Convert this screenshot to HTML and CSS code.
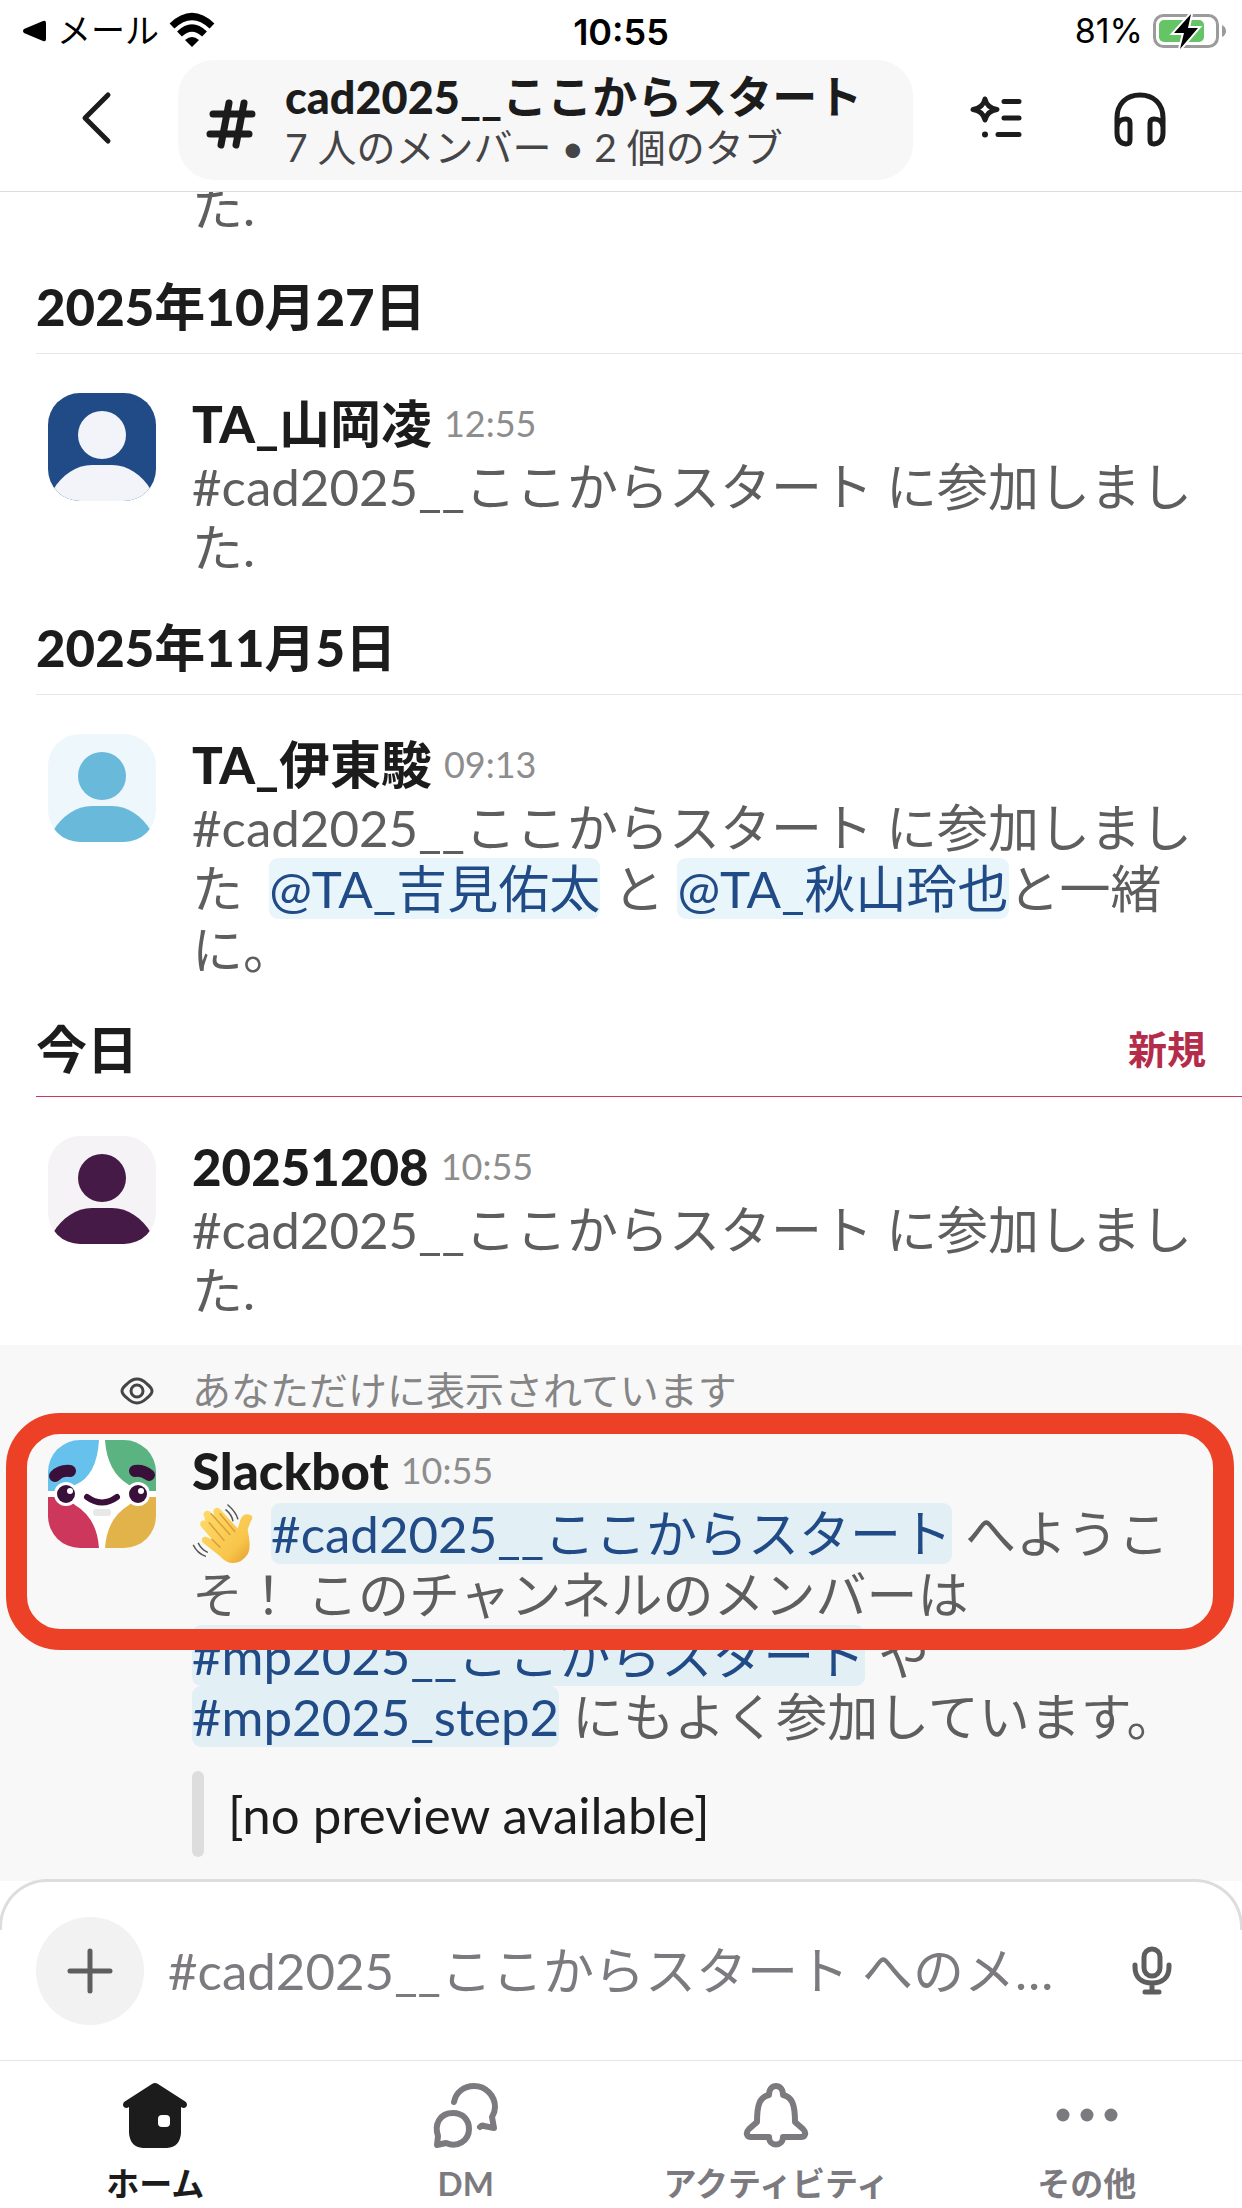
FILE: index.html
```html
<!DOCTYPE html>
<html lang="ja">
<head>
	<meta charset="UTF-8">
	<meta name="viewport" content="width=device-width">
	<title>cad2025__ここからスタート</title>
	<link rel="stylesheet" href="styles.css">
</head>
<body>
	<svg class="defs" width="0" height="0">
		<symbol id="person" viewBox="0 0 108 108">
			<ellipse cx="54" cy="42" rx="24" ry="24"/>
			<path d="M5 97C14 82 28 72 44 72H64C80 72 94 82 103 97V108H5z"/>
		</symbol>
	</svg>

	<div class="status">
		<div class="status-left">
			<svg width="24" height="22" viewBox="0 0 24 22"><path d="M1 9L20 1Q23 0 23 3V19Q23 22 20 21L1 13Q-1 11 1 9z"/></svg>
			<span>メール</span>
			<svg width="46" height="34" viewBox="0 0 46 34">
				<path d="M3 12Q23-7 43 12" fill="none" stroke="#000" stroke-width="7"/>
				<path d="M10.500 20Q23 8 35.500 20" fill="none" stroke="#000" stroke-width="7"/>
				<path d="M16 26Q23 20 30 26L23 33z"/>
			</svg>
		</div>
		<div class="status-time">10:55</div>
		<div class="status-right">
			<span>81%</span>
			<svg width="74" height="34" viewBox="0 0 74 34">
				<rect x="1.500" y="1.500" width="63" height="31" rx="9" fill="none" stroke="#9b9b9b" stroke-width="3"/>
				<rect x="6" y="6" width="45" height="22" rx="5" fill="#65c466"/>
				<path d="M69 11Q73 13 73 17T69 23z" fill="#9b9b9b"/>
				<path d="M38 0L21 19H31L27 35L45 14H35z" stroke="#fff" stroke-width="4" paint-order="stroke"/>
			</svg>
		</div>
	</div>

	<header class="header">
		<button class="icon-btn back" aria-label="戻る">
			<svg width="30" height="52" viewBox="0 2 30 52"><path d="M28 3L5 26L28 49"/></svg>
		</button>
		<button class="channel">
			<svg class="hash" width="48" height="50" viewBox="0 -3 48 50"><path d="M22 4L14 46M37 4L29 46M6 15H45M3 35H42"/></svg>
			<span class="channel-text">
				<span class="channel-name">cad2025__<span class="cjk">ここからスタート</span></span>
				<span class="channel-sub">7 人のメンバー • 2 個のタブ</span>
			</span>
		</button>
		<button class="icon-btn" aria-label="要約">
			<svg width="54" height="54" viewBox="0 3 54 54">
				<path d="M16 9Q18 18 28 19.500Q18 21 16 30Q14 21 4 19.500Q14 18 16 9zM35 11.500H50M35 28H50M29 44.500H50"/>
				<circle cx="16" cy="44.500" r="3" class="fill"/>
			</svg>
		</button>
		<button class="icon-btn" aria-label="ハドルミーティング">
			<svg width="54" height="56" viewBox="0 1 54 56">
				<path d="M4 42V27C4 13 13 4 27 4S50 13 50 27V42M4 36C5 29 9 28 13 28Q17 28 17 32V49Q17 53 13 53Q4 52 4 42M50 36C49 29 45 28 41 28Q37 28 37 32V49Q37 53 41 53Q50 52 50 42"/>
			</svg>
		</button>
	</header>

	<main class="messages">
		<article class="message cut">
			<div class="body"><p class="text">た.</p></div>
		</article>

		<h2 class="day"><span>2025<span class="cjk">年</span>10<span class="cjk">月</span>27<span class="cjk">日</span></span></h2>
		<article class="message">
			<svg class="avatar navy"><use href="#person"/></svg>
			<div class="body">
				<div class="meta"><b>TA_<span class="cjk">山岡凌</span></b><time>12:55</time></div>
				<p class="text">#cad2025__ここからスタート に参加しました.</p>
			</div>
		</article>

		<h2 class="day"><span>2025<span class="cjk">年</span>11<span class="cjk">月</span>5<span class="cjk">日</span></span></h2>
		<article class="message">
			<svg class="avatar sky"><use href="#person"/></svg>
			<div class="body">
				<div class="meta"><b>TA_<span class="cjk">伊東駿</span></b><time>09:13</time></div>
				<p class="text">#cad2025__ここからスタート に参加しました&nbsp; <a href="#">@TA_吉見佑太</a> と <a href="#">@TA_秋山玲也</a>と一緒に。</p>
			</div>
		</article>

		<h2 class="day new"><span class="cjk">今日</span><span class="new-label">新規</span></h2>
		<article class="message">
			<svg class="avatar plum"><use href="#person"/></svg>
			<div class="body">
				<div class="meta"><b>20251208</b><time>10:55</time></div>
				<p class="text">#cad2025__ここからスタート に参加しました.</p>
			</div>
		</article>

		<section class="only-you">
			<div class="notice">
				<svg width="34" height="28" viewBox="0 0 34 28">
					<path d="M2 14Q2 11 7 7Q12 2 17 2T27 7Q32 11 32 14T27 21Q22 26 17 26T7 21Q2 17 2 14z"/>
					<circle cx="17" cy="14" r="6"/>
				</svg>
				<span>あなただけに表示されています</span>
			</div>
			<article class="message">
				<svg class="avatar bot" viewBox="0 0 108 108">
					<path d="M0 0H51Q49 36 27 45L17 51H0z" fill="#66c1ec"/>
					<path d="M57 0H108V51H91L81 45Q59 32 57 0z" fill="#5bb381"/>
					<path d="M0 57H17L27 65Q49 78 51 108H0z" fill="#cc375b"/>
					<path d="M108 57H91L81 65Q59 78 57 108H108z" fill="#e3b34b"/>
					<circle cx="18" cy="54" r="12" fill="#fff"/>
					<circle cx="90" cy="54" r="12" fill="#fff"/>
					<circle cx="18" cy="54" r="9" fill="#38103a"/>
					<circle cx="90" cy="54" r="9" fill="#38103a"/>
					<circle cx="22" cy="51" r="3" fill="#fff"/>
					<circle cx="93" cy="51" r="3" fill="#fff"/>
					<path d="M7 36Q13 30 22 31M101 35Q95 30 87 31" fill="none" stroke="#38103a" stroke-width="12" stroke-linecap="round"/>
					<path d="M39 57Q54 68 69 57" fill="none" stroke="#38103a" stroke-width="6" stroke-linecap="round"/>
					<rect x="45" y="69" width="18" height="7" rx="3" fill="#e8e8e8"/>
				</svg>
				<div class="body">
					<div class="meta"><b>Slackbot</b><time>10:55</time></div>
					<p class="text"><svg class="wave" viewBox="0 0 62 62" role="img" aria-label="wave">
						<defs>
							<linearGradient id="skin" x1="0" y1="0" x2="1" y2="1">
								<stop offset="0" stop-color="#ffdc6b"/>
								<stop offset="0.700" stop-color="#f8c54a"/>
								<stop offset="1" stop-color="#e09a2c"/>
							</linearGradient>
						</defs>
						<path fill="url(#skin)" d="M41 61Q34 61 28 54L10 40Q8 35 13 34L20 37L8 23Q7 17 13 18L11 11Q13 6 18 9L22 14L21 8Q23 3 28 6L46 26L49 16Q53 9 60 13Q62 15 59 19L56 27Q60 46 56 52Q50 61 41 61z"/>
						<path d="M17 20L32 38M19 11L38 32M28 11L43 29M20 37L28 45" fill="none" stroke="#dc9d38" stroke-width="1.500" stroke-linecap="round"/>
						<path d="M36 2Q44 9 46 16M34 7Q40 12 41 18M1 43Q5 51 13 54M6 41Q9 47 15 50" fill="none" stroke="#555" stroke-width="1.500" stroke-linecap="round"/>
					</svg> <a href="#">#cad2025__ここからスタート</a> へようこそ！ このチャンネルのメンバーは <a href="#">#mp2025__ここからスタート</a> や <a href="#">#mp2025_step2</a> にもよく参加しています。</p>
					<div class="attachment">[no preview available]</div>
				</div>
			</article>
			<div class="marker"></div>
		</section>
	</main>

	<form class="composer">
		<button type="button" class="plus" aria-label="追加">
			<svg width="46" height="46" viewBox="0 0 46 46"><path d="M23 3V43M3 23H43"/></svg>
		</button>
		<input type="text" aria-label="メッセージ" placeholder="#cad2025__ここからスタート へのメッセージ">
		<button type="button" class="mic" aria-label="音声">
			<svg width="40" height="50" viewBox="0 0 40 50">
				<rect x="12" y="3" width="16" height="27" rx="8"/>
				<path d="M3 19V21C3 31 9 37 20 37S37 31 37 21V19M20 37V46M13 46H27"/>
			</svg>
		</button>
	</form>

	<nav class="tabs">
		<a href="#" class="active">
			<svg width="64" height="66" viewBox="0 0 64 66">
				<path class="fill" d="M29 1Q32-1 35 1L63 19Q65 22 63 24Q61 26 58 24V50Q57 64 44 65H20Q7 64 6 50V24Q3 26 1 24Q-1 22 1 19z"/>
				<rect class="window" x="35" y="32" width="12" height="12" rx="4"/>
			</svg>
			<span>ホーム</span>
		</a>
		<a href="#">
			<svg width="64" height="66" viewBox="0 0 64 66">
				<path d="M20 19C22 9 30 3 40 3C52 3 61 13 61 24Q61 29 58 34L60 45L50 43Q48 42 46 44"/>
				<path d="M4 53C0 41 6 30 19 30C29 30 35 37 35 46C35 58 23 65 12 60L3 62z"/>
			</svg>
			<span>DM</span>
		</a>
		<a href="#">
			<svg width="64" height="66" viewBox="0 0 64 66">
				<path d="M25 12C25 0 39 0 39 12C48 14 51 21 51 39L59 46C63 50 61 54 57 54H39C39 64 25 64 25 54H7C3 54 1 50 5 46L13 39C13 21 16 14 25 12z"/>
			</svg>
			<span>アクティビティ</span>
		</a>
		<a href="#">
			<svg width="64" height="66" viewBox="0 0 64 66">
				<circle class="fill" cx="8" cy="32" r="6.500"/><circle class="fill" cx="32" cy="32" r="6.500"/><circle class="fill" cx="56" cy="32" r="6.500"/>
			</svg>
			<span>その他</span>
		</a>
	</nav>
</body>
</html>
```
FILE: styles.css
```css
*{box-sizing: border-box;}
body{margin: 0;height: 100vh;display: flex;flex-direction: column;background: #fff;color: #1c1c1c;font-family: Lato,"Noto Sans CJK JP",sans-serif;font-size: 51px;line-height: 61px;}
button{border: 0;padding: 0;background: none;color: inherit;font: inherit;text-align: left;}
a{text-decoration: none;}
h2,p{margin: 0;}
svg{display: block;flex: none;overflow: visible;}
.defs{position: absolute;}
.cjk{font-weight: 700;}

.status{display: grid;grid-template-columns: 1fr auto 1fr;align-items: center;height: 60px;padding: 0 15px;color: #000;font-family: Inter,"Noto Sans CJK JP",sans-serif;font-size: 34px;line-height: 60px;}
.status-left,.status-right{display: flex;align-items: center;gap: 10px;}
.status-left{padding-left: 8px;}
.status-right{justify-content: flex-end;}
.status-time{padding-top: 2px;font-size: 36px;font-weight: 600;}

.header{display: flex;align-items: center;height: 132px;padding: 0 75px 12px 80px;border-bottom: 1px solid #ddd;}
.header svg{fill: none;stroke: #1c1c1c;stroke-width: 5;stroke-linecap: round;stroke-linejoin: round;}
.header .hash{stroke-width: 7;}
.header .fill{fill: #1c1c1c;stroke: none;}
.icon-btn{margin-left: 90px;}
.channel + .icon-btn{margin-left: 56px;}
.back{margin: 0 68px 0 0;}
.channel{flex: 1;display: flex;align-items: center;gap: 30px;height: 120px;padding: 2px 29px 0;border-radius: 36px;background: #f7f7f7;}
.channel-text{flex: 1;}
.channel-name,.channel-sub{display: block;white-space: nowrap;}
.channel-name{font-size: 45px;line-height: 54px;font-weight: 900;}
.channel-sub{font-size: 39px;line-height: 47px;color: #454547;}

.messages{flex: 1;min-height: 0;display: flex;flex-direction: column;justify-content: flex-end;overflow: hidden;}
.messages > *{flex: none;}
.day{display: flex;justify-content: space-between;margin-left: 36px;padding: 15px 36px 16px 0;border-bottom: 1px solid #e8e8e8;font-size: 51px;font-weight: 900;}
.new{border-color: #cc375b;}
.new-label{color: #b52b4a;font-size: 39px;font-weight: 700;}
.message{display: flex;gap: 36px;padding: 39px 42px 24px 48px;}
.cut{padding: 0 42px 24px 192px;}
.avatar{width: 108px;height: 108px;border-radius: 32px;overflow: hidden;}
.navy{background: #204b86;fill: #f3f4f9;}
.sky{background: #edf7fc;fill: #69b9da;}
.plum{background: #f5f3f6;fill: #461a47;}
.bot{background: #fff;}
.body{flex: 1;min-width: 0;}
.meta{display: flex;align-items: center;gap: 12px;margin-bottom: 2px;}
.meta b{font-weight: 900;}
.meta time{font-size: 36px;color: #8d8d8d;}
.text{color: #5e5e5e;}
.text a{border-radius: 9px;background: #e8f5fb;color: #204b86;white-space: nowrap;}

.only-you{position: relative;background: #f8f8f8;}
.only-you .text a{background: #e2eff5;}
.notice{display: flex;align-items: center;gap: 38px;padding: 22px 0 0 120px;font-size: 39px;line-height: 47px;color: #858585;}
.notice svg{fill: none;stroke: #454547;stroke-width: 3;}
.only-you .message{padding-top: 26px;}
.wave{display: inline-block;width: 62px;height: 61px;margin-right: 4px;vertical-align: bottom;}
.attachment{position: relative;margin-top: 24px;padding: 13px 36px 12px;color: #1c1c1c;}
.attachment::before{content: "";position: absolute;left: 0;top: 0;bottom: 0;width: 12px;border-radius: 6px;background: #ddd;}
/* highlight over the bot message */
.marker{position: absolute;left: 6px;right: 8px;top: 68px;height: 237px;border: 21px solid #ec4126;border-radius: 54px;}

.composer{position: relative;display: flex;align-items: center;height: 179px;padding: 0 60px 0 36px;background: #fff;}
.composer::before{content: "";position: absolute;left: -1px;right: -1px;top: -2px;height: 48px;border: 3px solid #ddd;border-bottom: 0;border-radius: 48px 48px 0 0;pointer-events: none;}
.composer svg{fill: none;stroke: #5e5e5e;stroke-width: 5;stroke-linecap: round;stroke-linejoin: round;}
.plus{display: flex;align-items: center;justify-content: center;width: 108px;height: 108px;border-radius: 50%;background: #f2f2f2;}
.composer input{flex: 1;min-width: 0;height: 62px;margin: 0 66px 0 24px;padding: 0;border: 0;outline: 0;background: none;font: inherit;text-overflow: ellipsis;}
.composer input::placeholder{color: #7c7a7f;opacity: 1;}
.mic{margin-right: 10px;}

.tabs{display: grid;grid-template-columns: repeat(4,1fr);height: 148px;border-top: 1px solid #e5e5e5;}
.tabs a{display: flex;flex-direction: column;align-items: center;gap: 14px;padding-top: 22px;color: #7c7a7f;font-size: 33px;line-height: 40px;font-weight: 700;}
.tabs svg{fill: none;stroke: currentColor;stroke-width: 6;stroke-linecap: round;stroke-linejoin: round;}
.tabs .fill{fill: currentColor;stroke: none;}
.tabs .window{fill: #fff;stroke: none;}
.tabs .active{color: #1c1c1c;}
```
